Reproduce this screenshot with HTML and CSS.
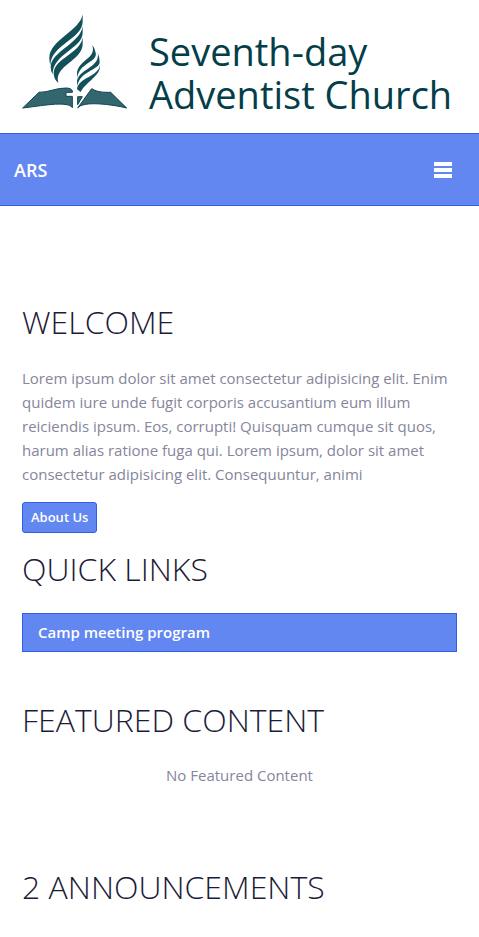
FILE: index.html
```html
<!DOCTYPE html>
<html lang="en">
<head>
<meta charset="utf-8">
<meta name="viewport" content="width=device-width, initial-scale=1">
<title>ARS</title>
<link rel="stylesheet" href="styles.css">
</head>
<body>
<header class="brand">
  <svg class="brand-mark" viewBox="36 27 315 285" aria-hidden="true">
    <g class="flame">
      <path d="M218 28C212 75 120 105 118 158Q118 170 121 180C124 118 218 103 218 49Z"/>
      <path d="M218 63C212 115 122 140 122 186Q122 198 128 208C128 146 218 130 218 83Z"/>
      <path d="M218 97C212 146 132 160 131 205C132 220 138 228 145 233C131 182 218 167 218 117Z"/>
      <path d="M246 120C263 160 201 166 201 207L202 219C206 173 264 172 257 143Q255 128 246 120Z"/>
      <path d="M263 144C273 187 201 193 201 232L202 244C208 198 269 195 269 171Q269 155 263 144Z"/>
      <path d="M270 180C266 215 204 218 201 253L212 261C230 228 273 212 270 180Z"/>
    </g>
    <g class="book">
      <path d="M38 309L87 262C117 262 139 248 170 249Q185 250 187 258V262H168V274H187V308C174 286 86 304 38 309Z"/>
      <path d="M203 309L245 251C265 263 285 262 302 262L350 309C309 299 220 286 203 309Z"/>
      <path d="M203 275H217L203 299Z"/>
    </g>
  </svg>
  <div class="brand-name">Seventh-day<br>Adventist Church</div>
</header>
<nav class="navbar">
  <a class="navbar-title" href="#">ARS</a>
  <button class="menu-button" type="button" aria-label="Menu">
    <svg class="menu-icon" viewBox="0 0 18 18" aria-hidden="true"><path d="M0 1h18v4H0zM0 7h18v4H0zM0 13h18v4H0z"/></svg>
  </button>
</nav>
<main class="content">
  <section class="welcome">
    <h2>WELCOME</h2>
    <p>Lorem ipsum dolor sit amet consectetur adipisicing elit. Enim quidem iure unde fugit corporis accusantium eum illum reiciendis ipsum. Eos, corrupti! Quisquam cumque sit quos, harum alias ratione fuga qui. Lorem ipsum, dolor sit amet consectetur adipisicing elit. Consequuntur, animi</p>
    <a class="button" href="#">About Us</a>
  </section>
  <section class="links">
    <h2>QUICK LINKS</h2>
    <a class="quick-link" href="#">Camp meeting program</a>
  </section>
  <section class="featured">
    <h2>FEATURED CONTENT</h2>
    <p class="empty">No Featured Content</p>
  </section>
  <section>
    <h2>2 ANNOUNCEMENTS</h2>
  </section>
</main>
</body>
</html>
```
FILE: styles.css
```css
* { box-sizing: border-box; }
body {
  margin: 0;
  background: #fff;
  color: #85859c;
  font: 400 15px/24px "Open Sans", "Noto Sans", sans-serif;
}
a { color: inherit; text-decoration: none; }
.brand {
  display: flex;
  align-items: flex-start;
  gap: 22px;
  padding: 14px 20px 17px 22px;
}
.brand-mark { flex: none; width: 105px; height: 95px; }
.flame { fill: #12505a; }
.book { fill: #34666f; stroke: #0e4450; stroke-width: 3; }
.brand-name {
  padding-top: 16px;
  color: #033e49;
  font: 400 38px/43px "Open Sans", "Noto Sans", sans-serif;
  white-space: nowrap;
}
.navbar {
  display: flex;
  align-items: center;
  justify-content: space-between;
  height: 73px;
  padding: 0 27px 0 14px;
  background: #6287f0;
  border: solid #2f5fe8;
  border-width: 1px 0;
  color: #fff;
}
.navbar-title { font-size: 18px; font-weight: 600; }
.menu-button { display: flex; padding: 0; border: 0; background: none; }
.menu-icon { width: 18px; height: 18px; fill: #fff; }
.content { padding: 96px 22px 0; }
h2 {
  margin: 0 0 24px;
  color: #1c1c38;
  font-size: 32px;
  font-weight: 300;
  line-height: 40px;
}
p { margin: 0 0 16px; }
.welcome { margin-bottom: 16px; }
.button {
  display: inline-block;
  padding: 0 8px;
  border: 1px solid #2f5fe8;
  border-radius: 3px;
  background: #6287f0;
  color: #fff;
  font-size: 13px;
  font-weight: 600;
  line-height: 29px;
}
.links { margin-bottom: 48px; }
.quick-link {
  display: block;
  padding: 0 15px;
  border: 1px solid #2f5fe8;
  background: #6287f0;
  color: #fff;
  font-weight: 600;
  line-height: 37px;
}
.featured { margin-bottom: 80px; }
.featured h2 { margin-bottom: 23px; }
.empty { text-align: center; }
```
